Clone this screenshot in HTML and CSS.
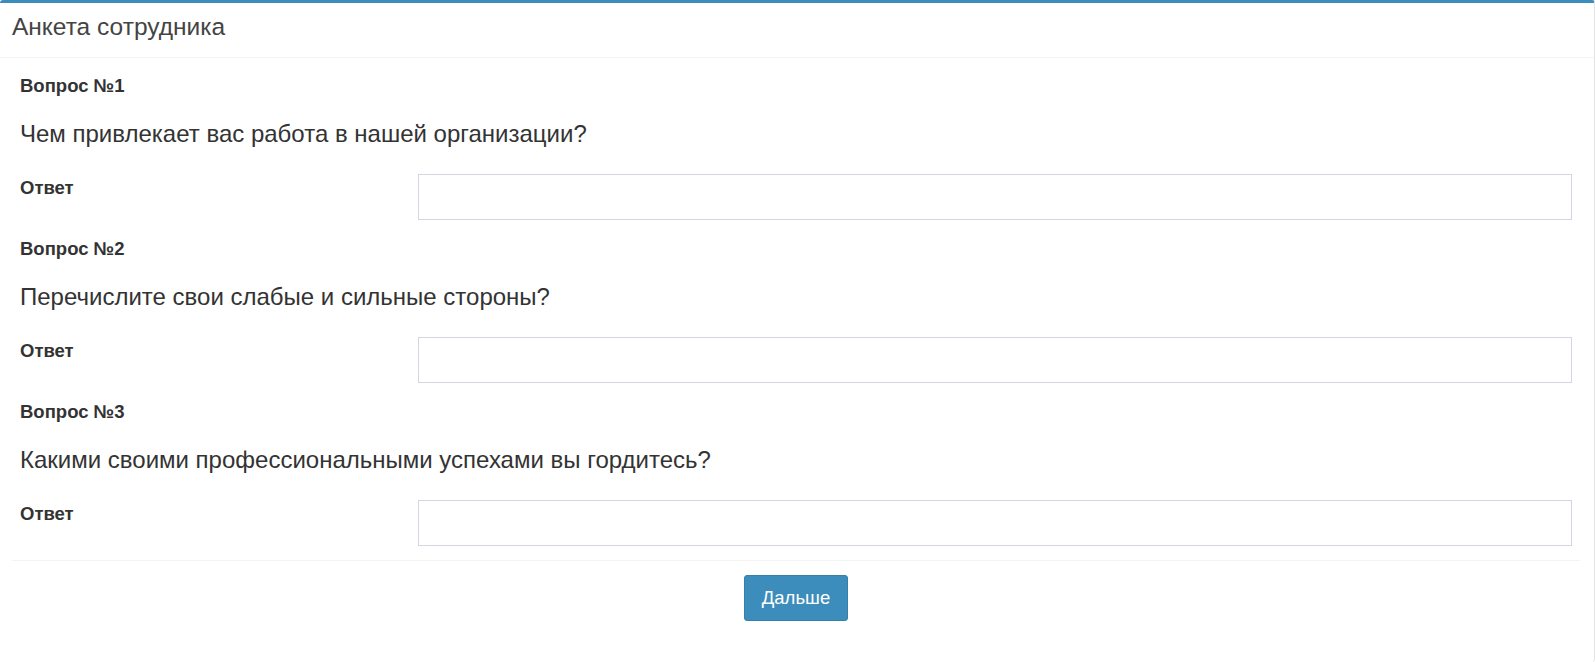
FILE: index.html
```html
<!DOCTYPE html>
<html lang="ru">
<head>
<meta charset="utf-8">
<title>Анкета сотрудника</title>
<link rel="stylesheet" href="styles.css">
</head>
<body>
<div class="box">
  <div class="box-header">
    <h3 class="box-title">Анкета сотрудника</h3>
  </div>
  <div class="box-main">
    <form class="box-body">
      <div class="q">
        <div class="q-label">Вопрос №1</div>
        <h3 class="q-text">Чем привлекает вас работа в нашей организации?</h3>
        <div class="answer-row">
          <label class="answer-label">Ответ</label>
          <input class="answer-input" type="text">
        </div>
      </div>
      <div class="q">
        <div class="q-label">Вопрос №2</div>
        <h3 class="q-text">Перечислите свои слабые и сильные стороны?</h3>
        <div class="answer-row">
          <label class="answer-label">Ответ</label>
          <input class="answer-input" type="text">
        </div>
      </div>
      <div class="q">
        <div class="q-label">Вопрос №3</div>
        <h3 class="q-text">Какими своими профессиональными успехами вы гордитесь?</h3>
        <div class="answer-row">
          <label class="answer-label">Ответ</label>
          <input class="answer-input" type="text">
        </div>
      </div>
    </form>
    <div class="box-footer">
      <button class="btn" type="button">Дальше</button>
    </div>
  </div>
</div>
</body>
</html>
```

FILE: styles.css
```css
html, body {
  margin: 0;
  padding: 0;
  background: #fff;
}
body {
  font-family: "Liberation Sans", Arial, sans-serif;
  color: #333;
}
.box {
  height: 100vh;
  box-sizing: border-box;
  border-top: 3px solid #3c8dbc;
  border-right: 1px solid #e4e4e4;
  border-radius: 3px;
  background: #fff;
}
.box-header {
  padding: 11px 12px 17px;
  border-bottom: 1px solid #f4f4f4;
}
.box-title {
  margin: 0;
  font-size: 24.5px;
  line-height: 26px;
  font-weight: normal;
  color: #444;
}
.box-main {
  padding: 0 14px 0 12px;
}
.box-body {
  margin: 0;
  padding: 18px 8px 14px;
  display: flex;
  flex-direction: column;
  gap: 19px;
}
.q-label {
  font-weight: bold;
  font-size: 18.5px;
  line-height: 20px;
}
.q-text {
  margin: 25px 0 27px;
  font-size: 24px;
  line-height: 26px;
  font-weight: normal;
}
.answer-row {
  display: grid;
  grid-template-columns: 398px 1fr;
}
.answer-label {
  font-weight: bold;
  font-size: 18.5px;
  line-height: 20px;
  padding-top: 4px;
}
.answer-input {
  display: block;
  width: 100%;
  height: 46px;
  box-sizing: border-box;
  border: 1px solid #d2d6de;
  border-radius: 0;
  padding: 10px 16px;
  font: 18px "Liberation Sans", Arial, sans-serif;
  background: #fff;
  outline: none;
}
.box-footer {
  border-top: 1px solid #f4f4f4;
  padding: 14px 0;
  display: flex;
  justify-content: center;
}
.btn {
  background: #3c8dbc;
  border: 1px solid #367fa9;
  color: #fff;
  font: 18.5px/24px "Liberation Sans", Arial, sans-serif;
  padding: 10px 17px;
  border-radius: 3px;
  cursor: pointer;
}
```
